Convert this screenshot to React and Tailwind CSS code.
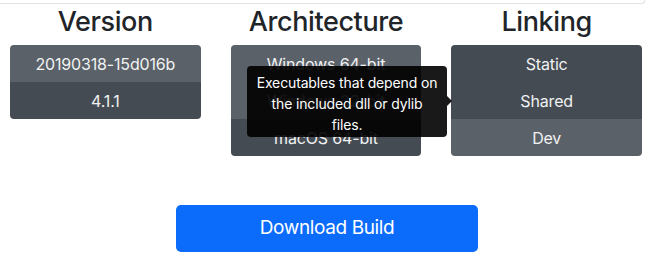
import React from 'react';

const light = 'bg-[#5a6168]';
const dark = 'bg-[#454b52]';

const Option = ({ label, tone }) => (
  <div className={`h-[37px] flex items-center justify-center pt-[1px] text-[16px] tracking-[-0.01em] text-[#f1f2f3] ${tone}`}>
    {label}
  </div>
);

const Column = ({ title, options }) => (
  <div className="flex flex-col">
    <h2 className="text-[27px] leading-[34px] tracking-[-0.015em] font-medium text-[#212529] text-center pt-[1px] h-[41px]">
      {title}
    </h2>
    <div className="rounded-[4px] overflow-hidden">
      {options.map((o) => (
        <Option key={o.label} label={o.label} tone={o.tone} />
      ))}
    </div>
  </div>
);

export default function App() {
  return (
    <div
      className="relative w-[652px] h-[263px] bg-white overflow-hidden"
      style={{ fontFamily: 'Inter, "Noto Sans", "Liberation Sans", sans-serif' }}
    >
      <div className="h-[4px] w-[645px] border-b border-r border-[#e3e3e3] rounded-br-[3px]" />

      <div className="grid grid-cols-3 gap-[30px] px-[10px] items-start">
        <Column
          title="Version"
          options={[
            { label: '20190318-15d016b', tone: light },
            { label: '4.1.1', tone: dark },
          ]}
        />
        <Column
          title="Architecture"
          options={[
            { label: 'Windows 64-bit', tone: light },
            { label: 'Windows 32-bit', tone: light },
            { label: 'macOS 64-bit', tone: dark },
          ]}
        />
        <Column
          title="Linking"
          options={[
            { label: 'Static', tone: dark },
            { label: 'Shared', tone: dark },
            { label: 'Dev', tone: light },
          ]}
        />
      </div>

      <div className="flex justify-center mt-[49px] pl-[2px]">
        <button className="w-[302px] h-[47px] rounded-[5px] bg-[#0b6cfb] text-white text-[19px] tracking-[-0.02em]">
          Download Build
        </button>
      </div>

      <div className="absolute left-[247px] top-[66px] w-[200px] h-[71px] rounded-[4px] bg-black/90 px-[4px] pt-[6px] text-white text-[14px] leading-[21px] tracking-[-0.01em] text-center">
        Executables that depend on
        <br />
        the included dll or dylib
        <br />
        files.
        <span className="absolute right-[-5px] top-[30px] w-0 h-0 border-y-[5px] border-y-transparent border-l-[5px] border-l-black/90" />
      </div>
    </div>
  );
}
